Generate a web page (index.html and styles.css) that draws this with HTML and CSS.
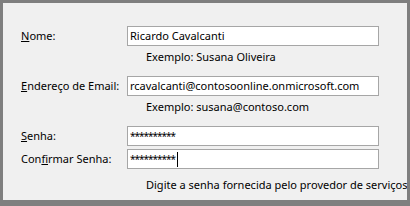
FILE: index.html
```html
<!DOCTYPE html>
<html lang="pt">
<head>
  <meta charset="UTF-8" />
  <title>Conta</title>
  <link rel="stylesheet" href="styles.css">
</head>
<body>
  <div class="frame">
    <div class="form">
      <div class="row">
        <span class="label"><u>N</u>ome:</span>
        <div class="field">Ricardo Cavalcanti</div>
      </div>
      <div class="hint">Exemplo: Susana Oliveira</div>

      <div class="row gap-lg">
        <span class="label"><u>E</u>ndereço de Email:</span>
        <div class="field">rcavalcanti@contosoonline.onmicrosoft.com</div>
      </div>
      <div class="hint">Exemplo: susana@contoso.com</div>

      <div class="row gap-lg">
        <span class="label"><u>S</u>enha:</span>
        <div class="field pw">**********</div>
      </div>
      <div class="row gap-sm">
        <span class="label">Con<u>f</u>irmar Senha:</span>
        <div class="field pw">**********<span class="caret"></span></div>
      </div>
      <div class="hint last">Digite a senha fornecida pelo provedor de serviços</div>
    </div>
  </div>
</body>
</html>
```

FILE: styles.css
```css
body {
  margin:0;
  font-family:"Noto Sans", sans-serif;
  font-size:11px;
  color:#000;
}
.frame {
  width:404px;
  height:197px;
  border:3px solid #7f7f7f;
  border-bottom-width:6px;
  background:#f0f0f0;
  overflow:hidden;
}
.form {
  padding:23px 0 0 18px;
}
.row {
  display:flex;
  align-items:center;
}
.gap-lg { margin-top:11px; }
.gap-sm { margin-top:3px; }
.label {
  width:106px;
  line-height:16px;
  white-space:nowrap;
}
.label u {
  text-underline-offset:1px;
}
.field {
  width:248px;
  height:18px;
  line-height:18px;
  border:1px solid #a6a6a6;
  background:#fff;
  padding-left:2px;
  white-space:nowrap;
  overflow:hidden;
  display:flex;
  align-items:center;
}
.pw {
  letter-spacing:-1px;
  font-size:10px;
}
.caret {
  display:inline-block;
  width:1px;
  height:15px;
  background:#000;
  margin-left:2px;
}
.hint {
  margin:3px 0 0 125px;
  line-height:16px;
  white-space:nowrap;
}
.hint.last {
  margin-top:8px;
}
```
